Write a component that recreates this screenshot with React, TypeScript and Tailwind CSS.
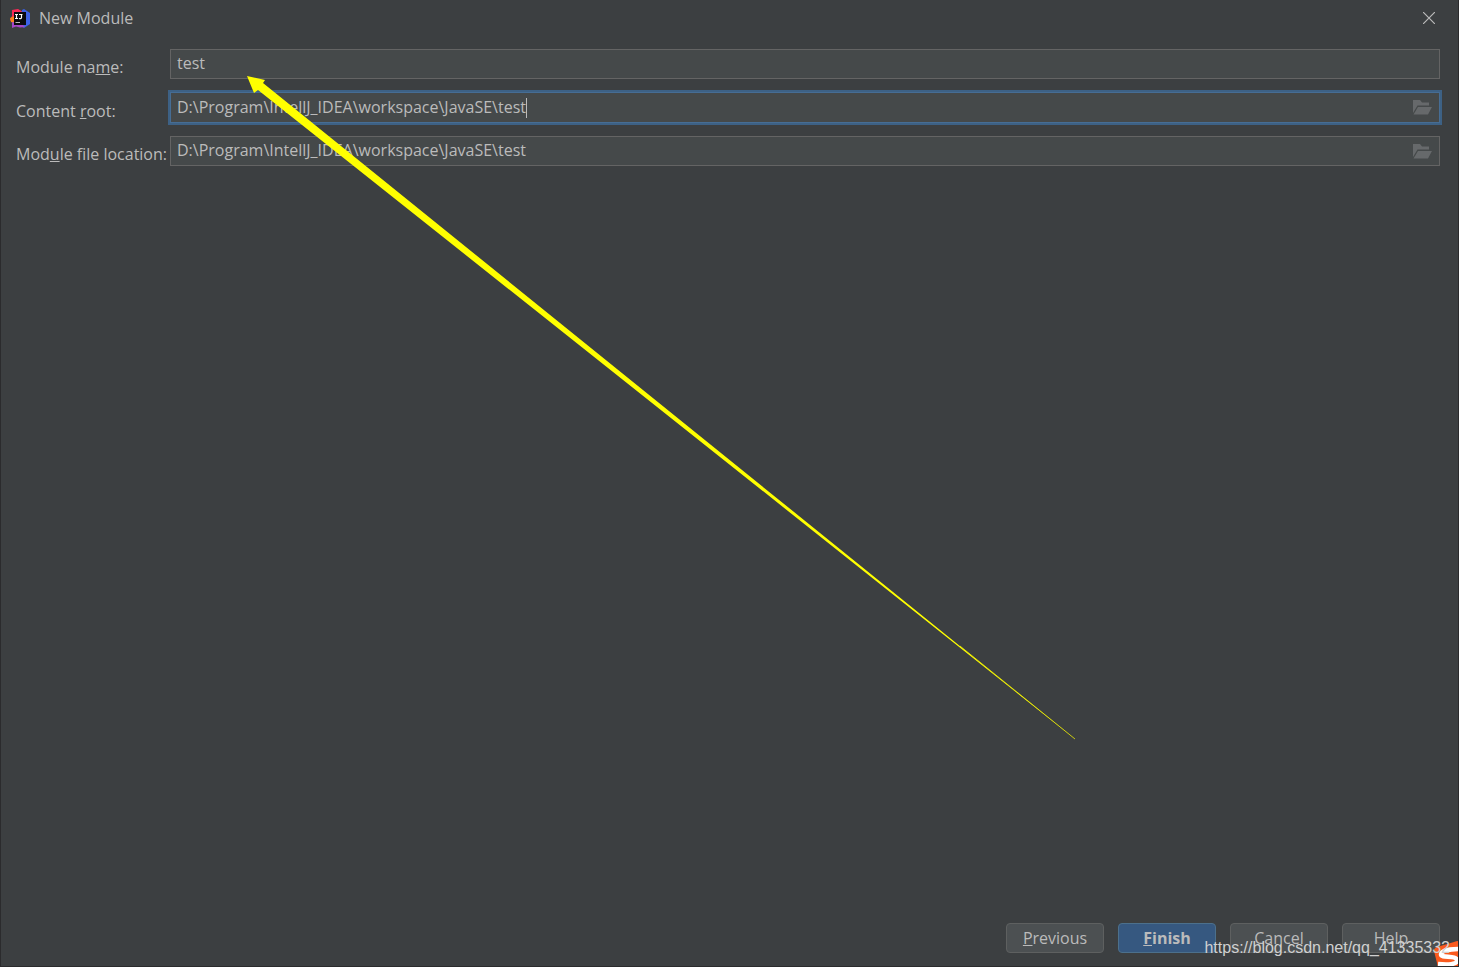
import React, { useState } from "react";

interface FieldProps {
  id: string;
  label: React.ReactNode;
  value: string;
  onChange: (value: string) => void;
  browsable?: boolean;
  active?: boolean;
}

const FolderIcon: React.FC = () => (
  <svg width="19" height="15" viewBox="0 0 19 15" fill="#66696b">
    <path d="M0 0h7l2 2.500H16v3H4.500L0 13z" />
    <path d="M5 7h14l-4 7.500H0.500z" />
  </svg>
);

const IdeaLogo: React.FC = () => (
  <svg width="20" height="19" viewBox="0 0 20 19">
    <path d="M2 1L8 0l5 3-2 12-8-2-3-2 2-4z" fill="#fe2857" />
    <path d="M0 9l4-2v7l-3-1z" fill="#fc801d" />
    <path d="M12 1l2-1 6 4v11l-6 4-5-3z" fill="#3d62e6" />
    <path d="M2 13l10 2 3 3-5 .5-4-1-4 1.500z" fill="#a646c8" />
    <rect x="4" y="3" width="12" height="13" fill="#0b0b0e" />
    <path
      d="M5 5.500h3M6.500 5v5M5 9.500h3M9 5.500h3.500M11.500 5v3.500q0 1.500-2.500 1"
      stroke="#fff"
      strokeWidth="1.200"
      fill="none"
    />
    <path d="M5.500 13.500h4.500" stroke="#bbb" />
  </svg>
);

const Field: React.FC<FieldProps> = ({ id, label, value, onChange, browsable, active }) => (
  <>
    <label htmlFor={id} className="self-center pt-1.5 whitespace-nowrap">
      {label}
    </label>
    <div
      className={
        active
          ? "flex h-[31px] items-center border border-[#466d94] bg-[#45494a] pl-[6px] pr-[7px] ring-2 ring-[#3d6185]"
          : "flex h-[30px] items-center border border-[#646464] bg-[#45494a] pl-[6px] pr-[7px]"
      }
    >
      <input
        id={id}
        type="text"
        value={value}
        onChange={event => onChange(event.target.value)}
        className={
          active
            ? "field-sizing-content bg-transparent pb-0.5 leading-6 outline-none"
            : "min-w-0 flex-1 bg-transparent pb-0.5 leading-6 outline-none"
        }
      />
      {active && <span className="h-5 w-px bg-[#bbbbbb]" />}
      {browsable && (
        <button type="button" aria-label="Browse" className="ml-auto">
          <FolderIcon />
        </button>
      )}
    </div>
  </>
);

const buttonClass =
  "h-[30px] w-[98px] rounded-[4px] border border-[#5e6060] bg-[#4c5052]";

const App: React.FC = () => {
  const [name, setName] = useState("test");
  const [root, setRoot] = useState("D:\\Program\\IntellJ_IDEA\\workspace\\JavaSE\\test");
  const [location, setLocation] = useState("D:\\Program\\IntellJ_IDEA\\workspace\\JavaSE\\test");

  return (
    <div className="relative flex min-h-screen flex-col overflow-hidden border-x border-b border-[#2b2b2d] bg-[#3c3f41] font-['Open_Sans',sans-serif] text-[16px] text-[#bbbbbb]">
      <header className="flex h-9 items-center pl-[9px] pr-[23px]">
        <IdeaLogo />
        <h1 className="ml-[9px]">New Module</h1>
        <button type="button" aria-label="Close" className="ml-auto">
          <svg width="12" height="12" viewBox="0 0 12 12" stroke="#bbbbbb" strokeWidth="1.200">
            <path d="M0 0L12 12M12 0L0 12" />
          </svg>
        </button>
      </header>

      <main className="grid grid-cols-[150px_1fr] gap-x-1 gap-y-[13px] pl-[15px] pr-[18px] pt-[13px]">
        <Field
          id="module-name"
          label={<>Module na<u>m</u>e:</>}
          value={name}
          onChange={setName}
        />
        <Field
          id="content-root"
          label={<>Content <u>r</u>oot:</>}
          value={root}
          onChange={setRoot}
          browsable
          active
        />
        <Field
          id="file-location"
          label={<>Mod<u>u</u>le file location:</>}
          value={location}
          onChange={setLocation}
          browsable
        />
      </main>

      <footer className="mt-auto flex justify-end gap-[14px] pb-[13px] pr-[18px]">
        <button type="button" className={buttonClass}>
          <u>P</u>revious
        </button>
        <button
          type="button"
          className="h-[30px] w-[98px] rounded-[4px] border border-[#4c708c] bg-[#365880] font-bold"
        >
          <u>F</u>inish
        </button>
        <button type="button" className={buttonClass}>Cancel</button>
        <button type="button" className={buttonClass}>Help</button>
      </footer>

      <svg
        className="pointer-events-none absolute left-0 top-0"
        width="1080"
        height="745"
        viewBox="1 0 1080 745"
        fill="#ffff00"
      >
        <polygon points="247,76 265,80 263,83 1075,739 258,90 254,93" />
        <path d="M960 646L1075 739" stroke="#ffff00" strokeWidth="0.700" />
      </svg>

      <svg className="absolute bottom-[-1px] right-[-1px]" width="25" height="26" viewBox="0 0 25 26">
        <path d="M0 10Q0 7 3 6L20 1Q23 0 25 0V26H4z" fill="#fa5a1e" />
        <path
          d="M26 8C15 8 7 10 7 13.500C7 17.500 23 14 23 19.500C23 23.500 14 24 4 23"
          stroke="#fff"
          strokeWidth="4.500"
          fill="none"
        />
      </svg>
      <span className="pointer-events-none absolute bottom-[6px] right-[8px] font-['Liberation_Sans',Arial,sans-serif] text-[16px] leading-6 text-[#d0d0d0]">
        https://blog.csdn.net/qq_41335332
      </span>
    </div>
  );
};

export default App;
